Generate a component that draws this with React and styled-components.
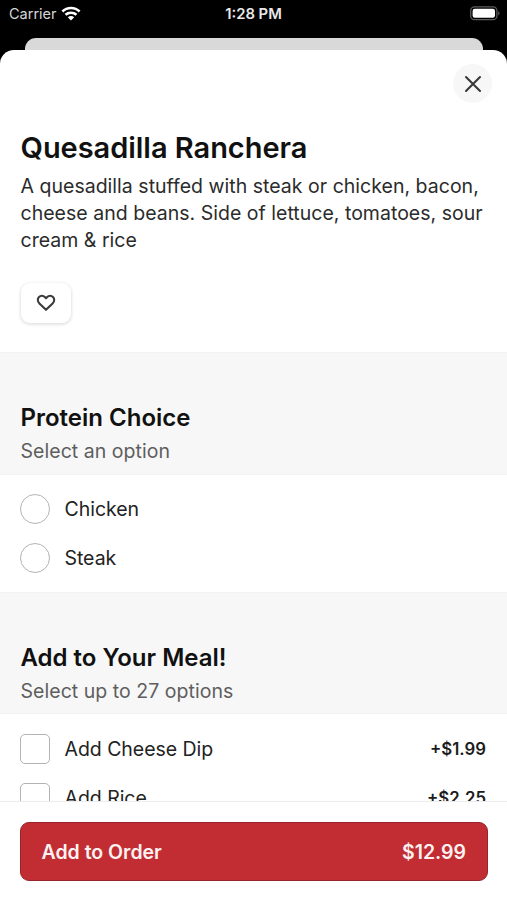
import { useState } from "react";
import styled, { createGlobalStyle } from "styled-components";

const proteins = ["Chicken", "Steak"];
const extras = [
    { name: "Add Cheese Dip", price: "+$1.99" },
    { name: "Add Rice", price: "+$2.25" },
];

const App = () => {
    const [protein, setProtein] = useState(null);
    const [added, setAdded] = useState([]);

    const toggleExtra = (name) => {
        setAdded(
            added.includes(name)
                ? added.filter((n) => n !== name)
                : [...added, name]
        );
    };

    return (
        <Screen>
            <GlobalStyle />
            <StatusBar>
                <Carrier>
                    Carrier
                    <WifiIcon />
                </Carrier>
                <Clock>1:28 PM</Clock>
                <StatusRight>
                    <BatteryIcon />
                </StatusRight>
            </StatusBar>
            <BackSheet />
            <Sheet>
                <CloseRow>
                    <CloseButton aria-label="Close">
                        <svg width="18" height="18" viewBox="0 0 18 18">
                            <path
                                d="M2 2L16 16M16 2L2 16"
                                fill="none"
                                stroke="#3a3a3a"
                                strokeWidth="2.1"
                                strokeLinecap="round"
                            />
                        </svg>
                    </CloseButton>
                </CloseRow>
                <Intro>
                    <Title>Quesadilla Ranchera</Title>
                    <Description>
                        A quesadilla stuffed with steak or chicken, bacon,
                        cheese and beans. Side of lettuce, tomatoes, sour cream
                        &amp; rice
                    </Description>
                    <LikeButton aria-label="Like">
                        <HeartIcon />
                    </LikeButton>
                </Intro>
                <SectionHead $height={123}>
                    <SectionTitle>Protein Choice</SectionTitle>
                    <SectionHint>Select an option</SectionHint>
                </SectionHead>
                <Options $height={117} $top={9}>
                    {proteins.map((name) => (
                        <Option key={name} onClick={() => setProtein(name)}>
                            <Radio $checked={protein === name} />
                            <OptionName>{name}</OptionName>
                        </Option>
                    ))}
                </Options>
                <SectionHead $height={122}>
                    <SectionTitle>Add to Your Meal!</SectionTitle>
                    <SectionHint>Select up to 27 options</SectionHint>
                </SectionHead>
                <Options $top={10}>
                    {extras.map(({ name, price }) => (
                        <Option key={name} onClick={() => toggleExtra(name)}>
                            <Checkbox $checked={added.includes(name)} />
                            <OptionName>{name}</OptionName>
                            <Price>{price}</Price>
                        </Option>
                    ))}
                </Options>
            </Sheet>
            <Footer>
                <OrderButton>
                    <span>Add to Order</span>
                    <span>$12.99</span>
                </OrderButton>
            </Footer>
        </Screen>
    );
};

const WifiIcon = () => (
    <svg width="20" height="15" viewBox="0 0 20 15">
        <g fill="none" stroke="#fff" strokeWidth="2.6">
            <path d="M1.4 5.5C6.2 0.8 13.8 0.8 18.6 5.5" />
            <path d="M4.5 8.8C7.6 6 12.4 6 15.5 8.8" />
        </g>
        <path d="M10 14.4L6.8 11.2C8.6 9.6 11.4 9.6 13.2 11.2Z" fill="#fff" />
    </svg>
);

const BatteryIcon = () => (
    <svg width="30" height="15" viewBox="0 0 30 15">
        <rect
            x="0.7"
            y="0.9"
            width="26.2"
            height="12.8"
            rx="3.8"
            fill="none"
            stroke="#5c5c5c"
            strokeWidth="1.3"
        />
        <rect x="2.6" y="2.8" width="22.4" height="9" rx="2.2" fill="#fff" />
        <path d="M28.2 5.2C30 5.8 30 8.8 28.2 9.4Z" fill="#5c5c5c" />
    </svg>
);

const HeartIcon = () => (
    <svg width="20" height="18" viewBox="0 0 20 18">
        <path
            d="M10 15.8L3.4 9.4C1.4 7.4 1.3 4.6 3 3C4.6 1.4 7.2 1.4 8.8 3L10 4.2L11.2 3C12.8 1.4 15.4 1.4 17 3C18.7 4.6 18.6 7.4 16.6 9.4Z"
            fill="none"
            stroke="#3a3a3a"
            strokeWidth="2.1"
            strokeLinejoin="round"
        />
    </svg>
);

const GlobalStyle = createGlobalStyle`
    * {
        box-sizing: border-box;
    }
    body {
        margin: 0;
        background-color: #000;
        font-family: Inter, "Liberation Sans", sans-serif;
    }
    button {
        font-family: inherit;
        padding: 0;
        border: none;
        cursor: pointer;
    }
    svg {
        display: block;
    }
`;

const Screen = styled.div`
    width: 100%;
    height: 100vh;
    overflow: hidden;
    display: flex;
    flex-direction: column;
    background-color: #000;
`;

const StatusBar = styled.div`
    flex: none;
    display: grid;
    grid-template-columns: 1fr auto 1fr;
    align-items: center;
    height: 38px;
    padding: 0 7px 11px 9px;
    color: #fff;
    font-size: 14.5px;
`;
const Carrier = styled.div`
    display: flex;
    align-items: center;
    gap: 4px;
    color: #d6d6d6;
`;
const Clock = styled.div`
    margin-right: 2px;
    font-size: 14.8px;
    font-weight: 600;
    color: #e8e8e8;
`;
const StatusRight = styled.div`
    display: flex;
    justify-content: flex-end;
`;

const BackSheet = styled.div`
    flex: none;
    height: 12px;
    margin: 0 24px 0 25px;
    border-radius: 11px 11px 0 0;
    background-color: #d9d9d9;
`;
const Sheet = styled.div`
    flex: 1;
    min-height: 0;
    overflow: hidden;
    border-radius: 14px 14px 0 0;
    background-color: #fff;
`;

const CloseRow = styled.div`
    display: flex;
    justify-content: flex-end;
    padding: 14px 15px 0 0;
`;
const CloseButton = styled.button`
    display: flex;
    align-items: center;
    justify-content: center;
    width: 39px;
    height: 39px;
    border-radius: 50%;
    background-color: #f7f7f7;
`;

const Intro = styled.div`
    height: 249px;
    padding: 25px 20px 0 20.5px;
`;
const Title = styled.h1`
    margin: 0;
    font-size: 29px;
    font-weight: 600;
    line-height: 40px;
    letter-spacing: -0.04px;
    color: #111;
`;
const Description = styled.p`
    margin: 5px 0 0;
    font-size: 19.5px;
    line-height: 27px;
    letter-spacing: 0.02px;
    color: #2b2b2b;
`;
const LikeButton = styled.button`
    display: flex;
    align-items: center;
    justify-content: center;
    width: 50px;
    height: 40px;
    margin: 29px 0 0 0.5px;
    padding-bottom: 1px;
    border-radius: 9px;
    background-color: #fff;
    box-shadow: 0 1px 3px 1px #0000001c;
`;

const SectionHead = styled.div`
    height: ${(props) => props.$height}px;
    padding: 50px 20.5px 0;
    border-top: 1px solid #f2f2f2;
    border-bottom: 1px solid #f2f2f2;
    background-color: #f7f7f7;
`;
const SectionTitle = styled.h2`
    margin: 0;
    font-size: 24px;
    font-weight: 600;
    line-height: 30px;
    color: #111;
`;
const SectionHint = styled.div`
    margin-top: 4px;
    font-size: 19.5px;
    line-height: 28px;
    letter-spacing: 0.04px;
    color: #5e5e5e;
`;

const Options = styled.div`
    height: ${(props) => (props.$height ? `${props.$height}px` : "auto")};
    padding: ${(props) => props.$top}px 21px 0 20px;
`;
const Option = styled.div`
    display: flex;
    align-items: center;
    height: 49px;
    cursor: pointer;
`;
const Radio = styled.div`
    flex: none;
    width: 30px;
    height: 30px;
    border: ${(props) => (props.$checked ? "9px solid #c12d32" : "1.5px solid #b3b3b3")};
    border-radius: 50%;
`;
const Checkbox = styled.div`
    flex: none;
    width: 30px;
    height: 30px;
    border: 1.5px solid ${(props) => (props.$checked ? "#c12d32" : "#b3b3b3")};
    border-radius: 5px;
    background-color: ${(props) => (props.$checked ? "#c12d32" : "#fff")};
`;
const OptionName = styled.div`
    flex: 1;
    margin-left: 14.5px;
    font-size: 19.5px;
    letter-spacing: -0.04px;
    color: #222;
`;
const Price = styled.div`
    font-size: 16.8px;
    font-weight: 600;
    color: #1c1c1c;
`;

const Footer = styled.div`
    flex: none;
    height: 99px;
    padding: 20px 19px 0 20px;
    border-top: 1px solid #ececec;
    background-color: #fff;
`;
const OrderButton = styled.button`
    display: flex;
    align-items: center;
    justify-content: space-between;
    width: 100%;
    height: 59px;
    padding: 0 21px 0 20.5px;
    border: 1px solid #96262b;
    border-radius: 9px;
    background-color: #c12d32;
    color: #fdf1f1;
    font-size: 19.5px;
    font-weight: 600;
`;

export default App;
